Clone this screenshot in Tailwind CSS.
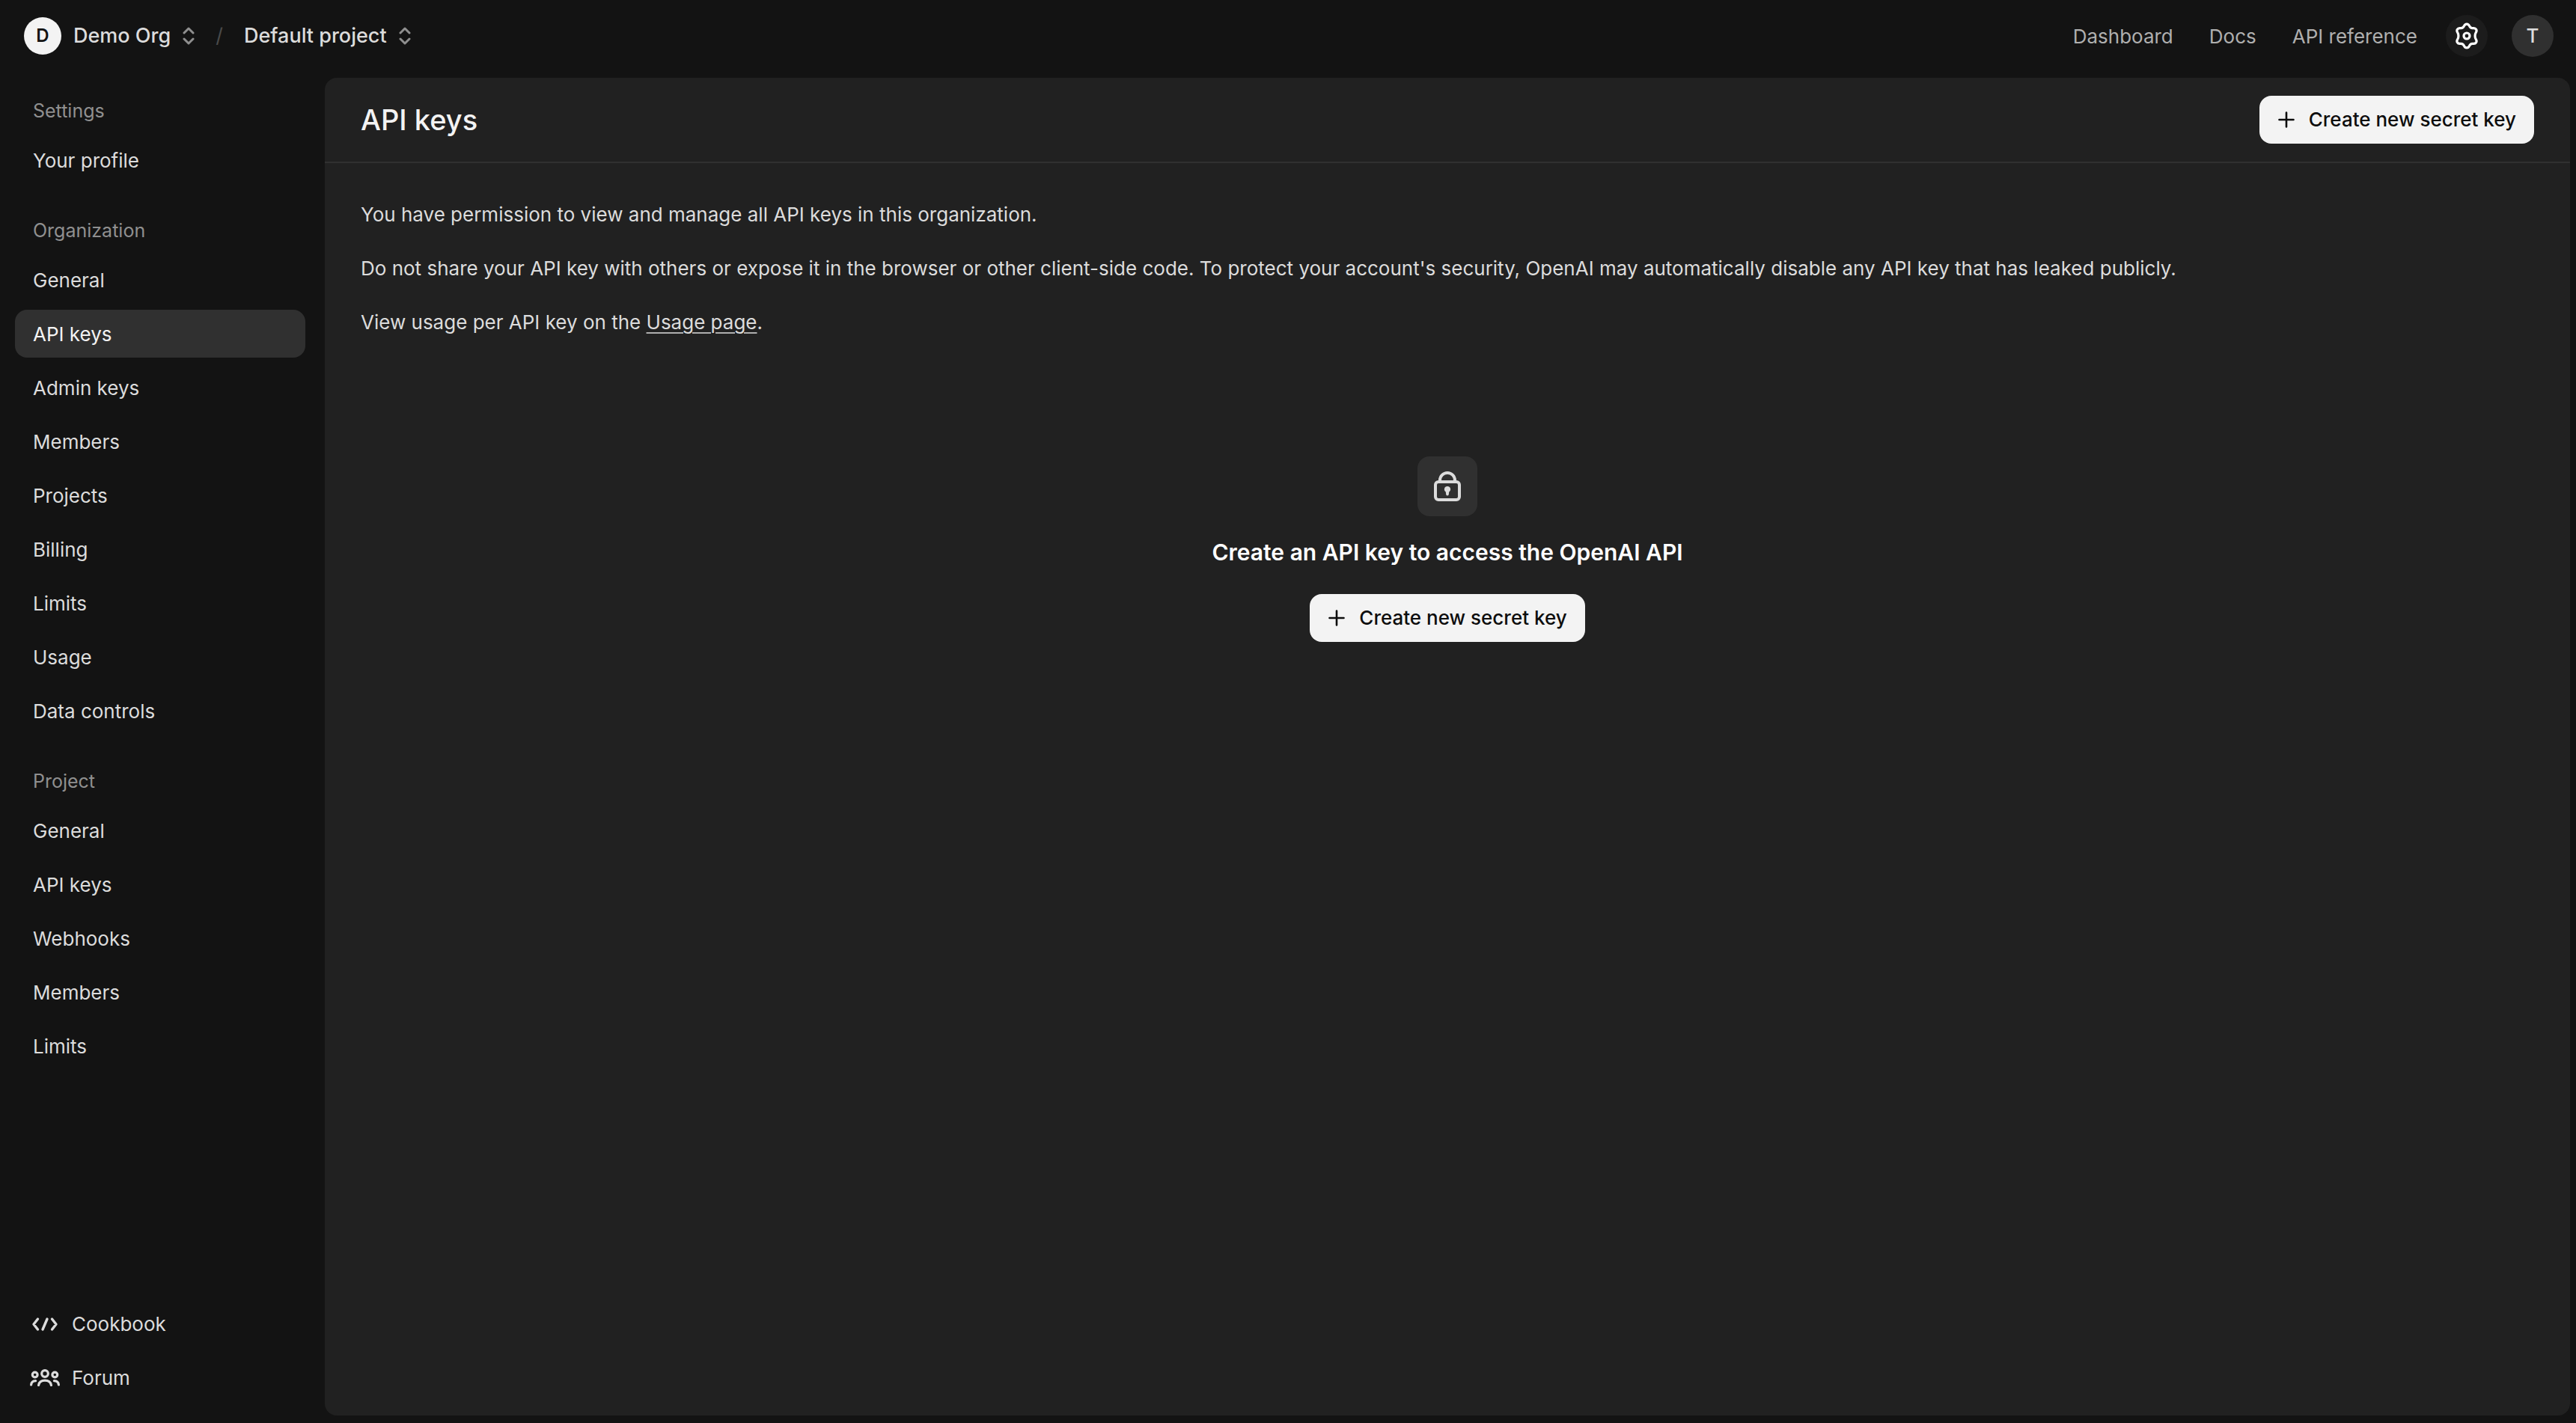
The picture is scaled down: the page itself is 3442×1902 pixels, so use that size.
<!DOCTYPE html>
<html lang="en">
<head>
    <meta charset="UTF-8">
    <meta name="viewport" content="width=device-width, initial-scale=1">
    <title>API keys</title>
    <script src="https://cdn.jsdelivr.net/npm/@tailwindcss/browser@4"></script>
</head>
<body class="flex flex-col h-screen bg-[#131313] text-[#dcdcdc] font-['Inter',sans-serif] text-[26px] leading-10">

<header class="flex items-center justify-between shrink-0 h-24 pl-8 pr-[30px]">
    <div class="flex items-center text-[27px]">
        <button type="button" class="flex items-center font-medium">
            <span class="flex items-center justify-center size-[50px] mr-4 rounded-full bg-[#f3f3f3] text-[#131313] text-2xl font-semibold">D</span>
            Demo Org
            <svg class="w-4 h-6 ml-4 text-[#8f8f8f]" viewBox="0 0 16 24" fill="none" stroke="currentColor" stroke-width="3" stroke-linecap="round" stroke-linejoin="round"><path d="M2 8l6-6 6 6M2 16l6 6 6-6"/></svg>
        </button>
        <span class="mx-7 text-[#4a4a4a]">/</span>
        <button type="button" class="flex items-center font-medium">
            Default project
            <svg class="w-4 h-6 ml-4 text-[#8f8f8f]" viewBox="0 0 16 24" fill="none" stroke="currentColor" stroke-width="3" stroke-linecap="round" stroke-linejoin="round"><path d="M2 8l6-6 6 6M2 16l6 6 6-6"/></svg>
        </button>
    </div>
    <div class="flex items-center">
        <nav class="flex items-center gap-12 pt-0.5 mr-[38px] text-[#afafaf]">
            <a href="#">Dashboard</a>
            <a href="#">Docs</a>
            <a href="#">API reference</a>
        </nav>
        <button type="button" aria-label="Settings" class="flex items-center justify-center size-14 mr-8 rounded-full bg-[#1c1c1c] text-white">
            <svg class="size-9" viewBox="0 0 36 36" fill="none" stroke="currentColor" stroke-width="3.2" stroke-linejoin="round"><path d="M14.5 4.6C16 1.2 20 1.2 21.5 4.6C22.5 7 24.2 7.900 26.700 7.600C30.400 7.200 32.300 10.600 30.200 13.700C28.700 15.900 28.700 20.100 30.200 22.300C32.300 25.400 30.400 28.800 26.700 28.400C24.200 28.100 22.500 29 21.500 31.400C20 34.800 16 34.800 14.500 31.400C13.500 29 11.800 28.100 9.300 28.400C5.600 28.800 3.700 25.400 5.800 22.300C7.300 20.100 7.300 15.900 5.800 13.700C3.700 10.600 5.600 7.200 9.300 7.600C11.800 7.900 13.500 7 14.500 4.600Z"/><circle cx="18" cy="18" r="4"/></svg>
        </button>
        <button type="button" aria-label="Account" class="flex items-center justify-center size-14 rounded-full bg-[#303030] font-medium">T</button>
    </div>
</header>

<div class="flex grow min-h-0">
    <aside class="flex flex-col shrink-0 w-[434px] pl-5 pr-[26px] py-7">
        <h2 class="px-6 mb-[10px] text-[25px] leading-[48px] text-[#8f8f8f]">Settings</h2>
        <nav class="flex flex-col gap-2">
            <a href="#" class="px-6 pt-[13px] pb-[11px] rounded-2xl">Your profile</a>
        </nav>
        <h2 class="px-6 mt-[38px] mb-[10px] text-[25px] leading-[48px] text-[#8f8f8f]">Organization</h2>
        <nav class="flex flex-col gap-2">
            <a href="#" class="px-6 pt-[13px] pb-[11px] rounded-2xl">General</a>
            <a href="#" class="px-6 pt-[13px] pb-[11px] rounded-2xl bg-[#303030] text-[#f3f3f3]">API keys</a>
            <a href="#" class="px-6 pt-[13px] pb-[11px] rounded-2xl">Admin keys</a>
            <a href="#" class="px-6 pt-[13px] pb-[11px] rounded-2xl">Members</a>
            <a href="#" class="px-6 pt-[13px] pb-[11px] rounded-2xl">Projects</a>
            <a href="#" class="px-6 pt-[13px] pb-[11px] rounded-2xl">Billing</a>
            <a href="#" class="px-6 pt-[13px] pb-[11px] rounded-2xl">Limits</a>
            <a href="#" class="px-6 pt-[13px] pb-[11px] rounded-2xl">Usage</a>
            <a href="#" class="px-6 pt-[13px] pb-[11px] rounded-2xl">Data controls</a>
        </nav>
        <h2 class="px-6 mt-[38px] mb-[10px] text-[25px] leading-[48px] text-[#8f8f8f]">Project</h2>
        <nav class="flex flex-col gap-2">
            <a href="#" class="px-6 pt-[13px] pb-[11px] rounded-2xl">General</a>
            <a href="#" class="px-6 pt-[13px] pb-[11px] rounded-2xl">API keys</a>
            <a href="#" class="px-6 pt-[13px] pb-[11px] rounded-2xl">Webhooks</a>
            <a href="#" class="px-6 pt-[13px] pb-[11px] rounded-2xl">Members</a>
            <a href="#" class="px-6 pt-[13px] pb-[11px] rounded-2xl">Limits</a>
        </nav>
        <nav class="flex flex-col gap-2 mt-auto">
            <a href="#" class="flex items-center gap-4 px-5 py-3 rounded-2xl">
                <svg class="w-10 h-8" viewBox="0 0 40 32" fill="none" stroke="currentColor" stroke-width="3.4" stroke-linecap="round" stroke-linejoin="round"><path d="M10.5 9L5 16l5.500 7M29.500 9L35 16l-5.500 7M23 9l-6 14"/></svg>
                Cookbook
            </a>
            <a href="#" class="flex items-center gap-4 px-5 py-3 rounded-2xl">
                <svg class="w-10 h-8" viewBox="0 0 40 32" fill="none" stroke="currentColor" stroke-width="3.2" stroke-linecap="round"><circle cx="20" cy="10" r="4.3"/><circle cx="6.7" cy="11.5" r="3.4"/><circle cx="33.3" cy="11.5" r="3.4"/><path d="M11.6 25.5c.6-4 4-6.3 8.400-6.300s7.800 2.300 8.400 6.300M1.600 25c.2-3.200 2.600-5.200 6-5.400M38.400 25c-.2-3.200-2.600-5.200-6-5.400"/></svg>
                Forum
            </a>
        </nav>
    </aside>

    <main class="grow min-w-0 mt-2 mr-2 mb-[10px] rounded-2xl bg-[#212121]">
        <div class="flex items-center justify-between px-12 py-6 border-b-2 border-[#303030]">
            <h1 class="text-[38px] font-medium text-[#f3f3f3]">API keys</h1>
            <button type="button" class="flex items-center gap-[18px] h-16 px-6 rounded-2xl bg-[#f3f3f3] text-[#0d0d0d] font-medium">
                <svg class="size-6" viewBox="0 0 24 24" fill="none" stroke="currentColor" stroke-width="2.6" stroke-linecap="round"><path d="M12 2.5v19M2.5 12h19"/></svg>
                Create new secret key
            </button>
        </div>
        <div class="flex flex-col gap-8 px-12 pt-[49px]">
            <p>You have permission to view and manage all API keys in this organization.</p>
            <p>Do not share your API key with others or expose it in the browser or other client-side code. To protect your account's security, OpenAI may automatically disable any API key that has leaked publicly.</p>
            <p>View usage per API key on the <a href="#" class="underline decoration-2 underline-offset-4 decoration-[#afafaf]">Usage page</a>.</p>
        </div>
        <div class="flex flex-col items-center mt-[159px]">
            <div class="flex items-center justify-center size-20 rounded-2xl bg-[#303030]">
                <svg class="w-9 h-10" viewBox="0 0 36 40" fill="none" stroke="currentColor" stroke-width="4"><rect x="2" y="14" width="32" height="24" rx="4"/><path d="M8 14v-2a10 10 0 0 1 20 0v2"/><path d="M18 20a4 4 0 0 1 2.200 7.400l-.4 3.400a1.800 1.800 0 0 1-3.600 0l-.4-3.400A4 4 0 0 1 18 20z" fill="currentColor" stroke="none"/></svg>
            </div>
            <h2 class="mt-6 mb-8 text-[30px] leading-[48px] font-semibold text-white">Create an API key to access the OpenAI API</h2>
            <button type="button" class="flex items-center gap-[18px] h-16 px-6 rounded-2xl bg-[#f3f3f3] text-[#0d0d0d] font-medium">
                <svg class="size-6" viewBox="0 0 24 24" fill="none" stroke="currentColor" stroke-width="2.6" stroke-linecap="round"><path d="M12 2.5v19M2.5 12h19"/></svg>
                Create new secret key
            </button>
        </div>
    </main>
</div>

</body>
</html>
